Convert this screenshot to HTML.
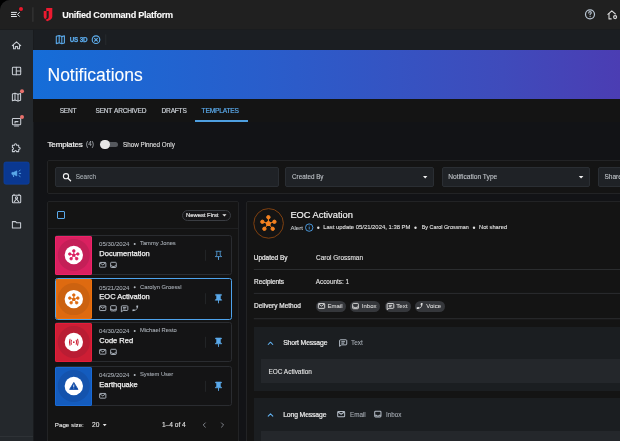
<!DOCTYPE html>
<html><head><meta charset="utf-8">
<style>
*{box-sizing:border-box;margin:0;padding:0}
html,body{width:620px;height:441px;overflow:hidden;background:#000;font-family:"Liberation Sans",sans-serif;}
.app{position:absolute;left:0;top:0;width:620px;height:441px;background:#121316;border-top-left-radius:10px;overflow:hidden;will-change:transform}
.abs{position:absolute}
.hdr{left:0;top:0;width:620px;height:29px;background:#202020}
.side{left:0;top:29px;width:33px;height:412px;background:#24282c}
.sub{left:33px;top:29px;width:587px;height:21px;background:#1b1e22}
.banner{left:33px;top:50px;width:587px;height:49px;background:linear-gradient(90deg,#156dd8 0%,#2c5bc9 45%,#3f4bbb 80%,#4b3db3 100%)}
.t{position:absolute;white-space:nowrap;line-height:1;-webkit-text-stroke:0.1px currentColor}
.m{font-weight:normal;-webkit-text-stroke:0.2px currentColor}
svg{position:absolute;overflow:visible}
</style></head><body>
<div class="app">
  <div class="abs hdr"></div>
  <div class="abs side"></div>
  <div class="abs sub"></div>
  <div class="abs" style="left:0;top:436px;width:33px;height:1px;background:#2e3236"></div>
  <div class="abs" style="left:0;top:28.5px;width:620px;height:1px;background:#1a1c1e"></div>
  <div class="abs" style="left:33px;top:29px;width:1px;height:412px;background:#191b1e"></div>
  <div class="abs banner"></div>
  <div class="abs" style="left:33px;top:99px;width:587px;height:22.5px;background:#141414"></div>


  <!-- header icons -->
  <svg style="left:0;top:0" width="620" height="29">
    <g stroke="#e2e6ea" stroke-width="1" stroke-linecap="butt" fill="none">
      <line x1="11" y1="12.4" x2="16.9" y2="12.4"/>
      <line x1="11" y1="14.45" x2="16.2" y2="14.45"/>
      <line x1="11" y1="16.5" x2="16.9" y2="16.5"/>
      <polyline points="19.7,12.2 17.5,14.4 19.7,16.6"/>
    </g>
    <circle cx="21" cy="9" r="2.6" fill="#1a1f1f"/>
    <circle cx="21" cy="9" r="2" fill="#e8192c"/>
    <rect x="32.4" y="7.3" width="1" height="14.5" fill="#3a3a3a"/>
    <path d="M46.2,8 H52.3 V16.6 C52.3,18.9 50.6,20.3 47.3,21.2 C46.5,20.8 45.9,20.3 45.4,19.8 C47.7,19.1 48.7,18.2 48.7,16.9 V11 H46.2 Z" fill="#ec1a30"/>
    <path d="M43.7,10.9 H46.6 V17.3 C46.6,18.1 46,18.6 45,19 C44.2,18.3 43.7,17.4 43.7,16.3 Z" fill="#ec1a30"/>
    <circle cx="590" cy="14.3" r="4.5" stroke="#b9c6d3" stroke-width="1.2" fill="none"/>
    <path d="M588.7,12.9 Q588.7,11.6 590,11.6 Q591.3,11.6 591.3,12.8 Q591.3,13.6 590.1,14.2 V14.8" stroke="#b9c6d3" stroke-width="1.1" fill="none" stroke-linecap="round"/>
    <circle cx="590.1" cy="16.6" r="0.65" fill="#b9c6d3"/>
    <g stroke="#d8d8d8" stroke-width="1.1" fill="none" stroke-linecap="round" stroke-linejoin="round">
      <polyline points="607.9,14.4 611.8,10.9 615.4,14"/>
      <polyline points="609,13.6 609,18.9 611.2,18.9"/>
      <circle cx="615.1" cy="17.1" r="1.5" stroke-width="1.2"/>
    </g>
  </svg>

  <!-- sub header -->
  <svg style="left:0;top:0" width="620" height="50">
    <g stroke="#5aa9ea" stroke-width="1.1" fill="none" stroke-linejoin="round">
      <path d="M56.3,36.3 L59.2,35.6 L61.8,36.6 L64.4,35.8 V43 L61.8,43.8 L59.2,42.8 L56.3,43.6 Z"/>
      <line x1="59.2" y1="35.6" x2="59.2" y2="42.8"/>
      <line x1="61.8" y1="36.6" x2="61.8" y2="43.8"/>
    </g>
    <circle cx="96" cy="39.7" r="3.8" stroke="#60b0f0" stroke-width="1.1" fill="none"/>
    <path d="M94.6,38.3 L97.4,41.1 M97.4,38.3 L94.6,41.1" stroke="#60b0f0" stroke-width="1.1" stroke-linecap="round"/>
    <rect x="105.4" y="34.3" width="0.8" height="10.7" fill="#2a2d31"/>
  </svg>
  <div class="t" style="left:69.7px;top:36.9px;font-size:6.3px;letter-spacing:-0.15px;font-weight:bold;-webkit-text-stroke:0.25px #5aa9ea;color:#5aa9ea">US 3D</div>


  <!-- sidebar icons -->
  <svg style="left:0;top:0" width="33" height="441">
    <g stroke="#c7ccd3" stroke-width="1.05" fill="none" stroke-linejoin="round" stroke-linecap="round">
      <!-- home -->
      <path d="M12.3,45.6 L16.5,41.8 L20.7,45.6 M13.5,44.6 V48.8 H15.4 V46.6 H17.6 V48.8 H19.5 V44.6"/>
      <!-- dashboard -->
      <rect x="12.4" y="67.2" width="8.3" height="7.6" rx="0.8"/>
      <line x1="16.3" y1="67.2" x2="16.3" y2="74.8"/>
      <line x1="16.3" y1="71" x2="20.7" y2="71"/>
      <!-- map -->
      <path d="M12.4,94 L15,93.3 L18,94.2 L20.6,93.5 V100.3 L18,101 L15,100.1 L12.4,100.8 Z"/>
      <line x1="15" y1="93.3" x2="15" y2="100.1"/>
      <line x1="18" y1="94.2" x2="18" y2="101"/>
      <!-- monitor -->
      <rect x="12.4" y="118.4" width="8.3" height="6.4" rx="0.8"/>
      <line x1="14.5" y1="126" x2="18.5" y2="126"/>
      <path d="M15,123 V121.6 H18"/>
      <!-- puzzle -->
      <path d="M12.4,145.3 H14.5 C14.5,143.3 16.6,143.3 16.6,145.3 H18.7 V147.3 C20.7,147.3 20.7,149.4 18.7,149.4 V151.6 H16.5 C16.5,150 14.6,150 14.6,151.6 H12.4 V149.5 C13.9,149.5 13.9,147.4 12.4,147.4 Z"/>
      <!-- id badge -->
      <rect x="12.4" y="195.3" width="8.3" height="7.4" rx="0.8"/>
      <path d="M14,195.3 V194.2 M19,195.3 V194.2"/>
      <circle cx="16.5" cy="197.8" r="1.1"/>
      <path d="M14.3,201.6 L16.5,199 L18.7,201.6"/>
      <!-- folder -->
      <path d="M12.4,221.6 H15.6 L16.6,222.8 H20.6 V228 H12.4 Z"/>
    </g>
    <circle cx="22" cy="91.2" r="2" fill="#e8706c"/>
    <circle cx="22" cy="117" r="2" fill="#e8706c"/>
    <rect x="3.9" y="162" width="25.3" height="22.2" rx="2" fill="#0a3891" stroke="#0d44a8" stroke-width="0.6"/>
    <g fill="#5aa9ea" stroke="#5aa9ea" stroke-linecap="round">
      <path d="M12,172.3 C11.6,172.3 11.6,174.5 12,174.5 H13.6 L16.9,176 V170.8 L13.6,172.3 Z" stroke-width="0.5"/>
      <path d="M13.1,174.6 L13.6,176.6" stroke-width="1"/>
      <path d="M19,171.1 L20.1,170.3 M19.3,173.4 H20.7 M19,175.7 L20.1,176.5" stroke-width="0.9" fill="none"/>
    </g>
  </svg>

  <!-- header content -->
  <div class="t" style="left:62.2px;top:10.7px;font-size:9.1px;letter-spacing:-0.27px;font-weight:bold;color:#fafafa">Unified Command Platform</div>
  <div class="t" style="left:47.5px;top:66.5px;font-size:17.5px;color:#fff">Notifications</div>

  <!-- tabs -->
  <div class="t" style="left:59.7px;top:108.1px;font-size:6.55px;letter-spacing:-0.2px;-webkit-text-stroke:0.2px #c9ced4;color:#c9ced4">SENT</div>
  <div class="t" style="left:95.5px;top:108.1px;font-size:6.55px;letter-spacing:-0.2px;word-spacing:0.7px;-webkit-text-stroke:0.2px #c9ced4;color:#c9ced4">SENT ARCHIVED</div>
  <div class="t" style="left:161.6px;top:108.1px;font-size:6.55px;letter-spacing:-0.2px;-webkit-text-stroke:0.2px #c9ced4;color:#c9ced4">DRAFTS</div>
  <div class="t" style="left:201.6px;top:108.1px;font-size:6.65px;letter-spacing:-0.2px;-webkit-text-stroke:0.2px #5aa9ea;color:#5aa9ea">TEMPLATES</div>
  <div class="abs" style="left:194.5px;top:120px;width:53px;height:2px;background:#4e9fe0"></div>

  <!-- templates row -->
  <div class="t" style="left:47.5px;top:140.9px;font-size:8.1px;letter-spacing:-0.2px;-webkit-text-stroke:0.22px #f0f0f0;color:#f0f0f0">Templates</div>
  <div class="t" style="left:86px;top:141px;font-size:6.4px;color:#a8adb3">(4)</div>
  <div class="abs" style="left:101px;top:141.8px;width:16.5px;height:5.6px;border-radius:3px;background:#55585d"></div>
  <div class="abs" style="left:100.4px;top:139.6px;width:9.6px;height:9.6px;border-radius:50%;background:#e6e6e6"></div>
  <div class="t" style="left:123px;top:141.6px;font-size:6.3px;color:#e0e0e0">Show Pinned Only</div>

  <!-- filter panel -->
  <div class="abs" style="left:47.2px;top:160.4px;width:600px;height:33.8px;border:1px solid #222325;border-radius:2px;background:#141414"></div>
  <div class="abs" style="left:55px;top:167px;width:223.5px;height:20px;border:1px solid #2a2e33;border-radius:2px;background:#1f2226"></div>
  <div class="abs" style="left:285.3px;top:167px;width:149.2px;height:20px;border:1px solid #2a2e33;border-radius:2px;background:#1f2226"></div>
  <div class="abs" style="left:441.8px;top:167px;width:148.5px;height:20px;border:1px solid #2a2e33;border-radius:2px;background:#1f2226"></div>
  <div class="abs" style="left:598px;top:167px;width:100px;height:20px;border:1px solid #2a2e33;border-radius:2px;background:#1f2226"></div>
  <svg style="left:0;top:0" width="620" height="200">
    <circle cx="66" cy="176.2" r="2.6" stroke="#f0f0f0" stroke-width="1.1" fill="none"/>
    <line x1="68" y1="178.2" x2="70.6" y2="180.8" stroke="#f0f0f0" stroke-width="1.3" stroke-linecap="round"/>
    <path d="M423,176 H427.4 L425.2,178.4 Z" fill="#f0f0f0"/>
    <path d="M578.8,176 H583.4 L581.1,178.4 Z" fill="#f0f0f0"/>
  </svg>
  <div class="t" style="left:75.8px;top:174.4px;font-size:6.4px;color:#aab0b6">Search</div>
  <div class="t" style="left:292px;top:174.3px;font-size:6.3px;color:#c0c5ca">Created By</div>
  <div class="t" style="left:448.3px;top:174.3px;font-size:6.65px;color:#c0c5ca">Notification Type</div>
  <div class="t" style="left:604.5px;top:174.3px;font-size:6.5px;color:#c0c5ca">Shared</div>

  <!-- list panel -->
  <div class="abs" style="left:47.2px;top:201px;width:191.5px;height:260px;border:1px solid #222325;border-radius:2px;background:#141414"></div>
  <div class="abs" style="left:48px;top:228px;width:190px;height:1px;background:#1f2022"></div>
  <div class="abs" style="left:57px;top:211px;width:8.2px;height:8.2px;border:1.1px solid #5aa9ea;border-radius:1px"></div>
  <div class="abs" style="left:182.3px;top:209.6px;width:49.1px;height:11.3px;border:1px solid #3a3d42;border-radius:6px;background:#161618"></div>
  <div class="t" style="left:186px;top:212.6px;font-size:5.85px;-webkit-text-stroke:0.2px #e0e0e0;color:#e0e0e0">Newest First</div>
  <svg style="left:0;top:0" width="620" height="441">
    <path d="M222.3,214.3 H226.5 L224.4,216.5 Z" fill="#e8e8e8"/>
  </svg>
  <!-- CARDS -->
<div class="abs" style="left:54.5px;top:235.0px;width:177.4px;height:40px;border:1px solid #2a2c30;border-radius:2.5px;background:#141415"></div>
<div class="abs" style="left:54.9px;top:236.0px;width:37.1px;height:38.8px;border-radius:2px;background:#da2060;box-shadow:inset 0 0 0 0.8px #f5246c"></div>
<svg style="left:0;top:0" width="620" height="441">
<circle cx="73.8" cy="255.0" r="16" fill="#c41f57"/><circle cx="73.8" cy="255.0" r="9.2" fill="#fff"/>
<g transform="translate(73.8,255.2) scale(0.67)" fill="#da2060" stroke="#da2060"><line x1="0" y1="0" x2="0" y2="-6.4" stroke-width="1.2"/><circle cx="0" cy="-6.4" r="2"/><line x1="0" y1="0" x2="-6" y2="-1.8" stroke-width="1.2"/><circle cx="-6" cy="-1.8" r="2"/><line x1="0" y1="0" x2="6" y2="-1.8" stroke-width="1.2"/><circle cx="6" cy="-1.8" r="2"/><line x1="0" y1="0" x2="-4" y2="5.2" stroke-width="1.2"/><circle cx="-4" cy="5.2" r="2"/><line x1="0" y1="0" x2="4.3" y2="5.2" stroke-width="1.2"/><circle cx="4.3" cy="5.2" r="2"/><path d="M0,-3 L2.9,-0.9 L1.8,2.5 L-1.8,2.5 L-2.9,-0.9 Z" stroke="none"/></g>
<rect x="205.2" y="249.8" width="0.8" height="11" fill="#26282b"/>
<g transform="translate(0,0.6)" stroke="#5aa9ea" stroke-width="0.8" fill="none" stroke-linejoin="round"><path d="M215.6,250.7 H221.4 M216.8,250.9 V254.6 L215.3,256.0 H221.7 L220.2,254.6 V250.9"/><line x1="218.5" y1="256.0" x2="218.5" y2="259.3" stroke-width="0.9"/></g>
<g transform="translate(99.2,262.0) scale(1.0)" stroke="#b4bcc6" stroke-width="0.9" fill="none" stroke-linejoin="round"><rect x="0.45" y="0.45" width="6.2" height="4.7" rx="0.6"/><polyline points="0.7,0.9 3.55,2.9 6.4,0.9"/></g>
<g transform="translate(110.2,262.0) scale(1.0)" stroke="#b4bcc6" stroke-width="0.9" fill="none" stroke-linejoin="round"><rect x="0.45" y="0.3" width="5.6" height="5.2" rx="0.8"/><polyline points="0.45,3.9 2,3.9 2.4,4.6 4.1,4.6 4.5,3.9 6.05,3.9"/></g>
</svg>
<div class="t" style="left:99.1px;top:241.1px;font-size:6.05px;color:#a4aab1">05/30/2024</div>
<svg style="left:0;top:0" width="620" height="441"><circle cx="134.7" cy="243.9" r="1" fill="#b4bac0"/></svg>
<div class="t" style="left:140px;top:241.1px;font-size:5.8px;color:#a4aab1">Tammy Jones</div>
<div class="t" style="left:99.3px;top:249.55px;font-size:7.5px;-webkit-text-stroke:0.25px #f2f2f2;color:#f2f2f2">Documentation</div>
<div class="abs" style="left:54.5px;top:278.4px;width:177.4px;height:41.4px;border:1.2px solid #4ea3ec;border-radius:2.5px;background:#141415"></div>
<div class="abs" style="left:55.7px;top:279.29999999999995px;width:36.3px;height:39.3px;border-radius:2px;background:#de6a10;box-shadow:inset 0 0 0 0.8px #f2740a"></div>
<svg style="left:0;top:0" width="620" height="441">
<circle cx="73.8" cy="299.09999999999997" r="16" fill="#cc6210"/><circle cx="73.8" cy="299.09999999999997" r="9.2" fill="#fff"/>
<g transform="translate(73.8,299.29999999999995) scale(0.67)" fill="#de6a10" stroke="#de6a10"><line x1="0" y1="0" x2="0" y2="-6.4" stroke-width="1.2"/><circle cx="0" cy="-6.4" r="2"/><line x1="0" y1="0" x2="-6" y2="-1.8" stroke-width="1.2"/><circle cx="-6" cy="-1.8" r="2"/><line x1="0" y1="0" x2="6" y2="-1.8" stroke-width="1.2"/><circle cx="6" cy="-1.8" r="2"/><line x1="0" y1="0" x2="-4" y2="5.2" stroke-width="1.2"/><circle cx="-4" cy="5.2" r="2"/><line x1="0" y1="0" x2="4.3" y2="5.2" stroke-width="1.2"/><circle cx="4.3" cy="5.2" r="2"/><path d="M0,-3 L2.9,-0.9 L1.8,2.5 L-1.8,2.5 L-2.9,-0.9 Z" stroke="none"/></g>
<rect x="205.2" y="293.2" width="0.8" height="11" fill="#26282b"/>
<g transform="translate(0,0.6)" fill="#5aa9ea" stroke="#5aa9ea" stroke-width="0.6" stroke-linejoin="round"><path d="M215.6,293.79999999999995 H221.4 V294.79999999999995 H220.4 V298.0 L221.8,299.59999999999997 H215.2 L216.6,298.0 V294.79999999999995 H215.6 Z"/><line x1="218.5" y1="299.4" x2="218.5" y2="302.7" stroke-width="0.9"/></g>
<g transform="translate(99.2,305.4) scale(1.0)" stroke="#b4bcc6" stroke-width="0.9" fill="none" stroke-linejoin="round"><rect x="0.45" y="0.45" width="6.2" height="4.7" rx="0.6"/><polyline points="0.7,0.9 3.55,2.9 6.4,0.9"/></g>
<g transform="translate(110.2,305.4) scale(1.0)" stroke="#b4bcc6" stroke-width="0.9" fill="none" stroke-linejoin="round"><rect x="0.45" y="0.3" width="5.6" height="5.2" rx="0.8"/><polyline points="0.45,3.9 2,3.9 2.4,4.6 4.1,4.6 4.5,3.9 6.05,3.9"/></g>
<g transform="translate(120.9,305.4) scale(1.0)" stroke="#b4bcc6" stroke-width="0.9" fill="none" stroke-linejoin="round"><path d="M1.2,0.45 H6.2 Q6.95,0.45 6.95,1.2 V4.3 Q6.95,5.05 6.2,5.05 H2.3 L0.45,6.4 V1.2 Q0.45,0.45 1.2,0.45 Z"/><line x1="2" y1="2.2" x2="5.4" y2="2.2"/><line x1="2" y1="3.5" x2="4.6" y2="3.5"/></g>
<g transform="translate(132.4,305.4) scale(1.0) translate(5.8,0) scale(-0.32,0.32) translate(-3,-3)" fill="#b4bcc6"><path d="M6.62 10.79c1.44 2.830 3.760 5.140 6.590 6.590l2.200-2.200c.270-.270.670-.360 1.020-.240 1.120.370 2.330.570 3.570.570.550 0 1 .450 1 1V20c0 .550-.450 1-1 1-9.390 0-17-7.610-17-17 0-.550.450-1 1-1h3.500c.550 0 1 .450 1 1 0 1.250.200 2.450.570 3.570.110.350.030.740-.250 1.020l-2.200 2.200z"/></g>
</svg>
<div class="t" style="left:99.1px;top:284.5px;font-size:6.05px;color:#a4aab1">05/21/2024</div>
<svg style="left:0;top:0" width="620" height="441"><circle cx="134.7" cy="287.29999999999995" r="1" fill="#b4bac0"/></svg>
<div class="t" style="left:140px;top:284.5px;font-size:5.8px;color:#a4aab1">Carolyn Groessl</div>
<div class="t" style="left:99.3px;top:292.95px;font-size:7.5px;-webkit-text-stroke:0.25px #f2f2f2;color:#f2f2f2">EOC Activation</div>
<div class="abs" style="left:54.5px;top:322.0px;width:177.4px;height:40px;border:1px solid #2a2c30;border-radius:2.5px;background:#141415"></div>
<div class="abs" style="left:54.9px;top:323.0px;width:37.1px;height:38.8px;border-radius:2px;background:#cd1e34;box-shadow:inset 0 0 0 0.8px #ee1c3e"></div>
<svg style="left:0;top:0" width="620" height="441">
<circle cx="73.8" cy="342.0" r="16" fill="#b91d33"/><circle cx="73.8" cy="342.0" r="9.2" fill="#fff"/>
<g stroke="#cd1e34" stroke-width="1.05" fill="none" stroke-linecap="round"><path d="M71.4,340.2 Q70.6,342.2 71.4,344.2 M76.2,340.2 Q77,342.2 76.2,344.2 M70,339.2 Q68.8,342.2 70,345.2 M77.6,339.2 Q78.8,342.2 77.6,345.2"/></g><circle cx="73.8" cy="342.2" r="0.85" fill="#cd1e34"/>
<rect x="205.2" y="336.8" width="0.8" height="11" fill="#26282b"/>
<g transform="translate(0,0.6)" fill="#5aa9ea" stroke="#5aa9ea" stroke-width="0.6" stroke-linejoin="round"><path d="M215.6,337.4 H221.4 V338.4 H220.4 V341.6 L221.8,343.2 H215.2 L216.6,341.6 V338.4 H215.6 Z"/><line x1="218.5" y1="343.0" x2="218.5" y2="346.3" stroke-width="0.9"/></g>
<g transform="translate(99.2,349.0) scale(1.0)" stroke="#b4bcc6" stroke-width="0.9" fill="none" stroke-linejoin="round"><rect x="0.45" y="0.45" width="6.2" height="4.7" rx="0.6"/><polyline points="0.7,0.9 3.55,2.9 6.4,0.9"/></g>
<g transform="translate(110.2,349.0) scale(1.0)" stroke="#b4bcc6" stroke-width="0.9" fill="none" stroke-linejoin="round"><rect x="0.45" y="0.3" width="5.6" height="5.2" rx="0.8"/><polyline points="0.45,3.9 2,3.9 2.4,4.6 4.1,4.6 4.5,3.9 6.05,3.9"/></g>
</svg>
<div class="t" style="left:99.1px;top:328.1px;font-size:6.05px;color:#a4aab1">04/30/2024</div>
<svg style="left:0;top:0" width="620" height="441"><circle cx="134.7" cy="330.9" r="1" fill="#b4bac0"/></svg>
<div class="t" style="left:140px;top:328.1px;font-size:5.8px;color:#a4aab1">Michael Resto</div>
<div class="t" style="left:99.3px;top:336.55px;font-size:7.5px;-webkit-text-stroke:0.25px #f2f2f2;color:#f2f2f2">Code Red</div>
<div class="abs" style="left:54.5px;top:366.0px;width:177.4px;height:40px;border:1px solid #2a2c30;border-radius:2.5px;background:#141415"></div>
<div class="abs" style="left:54.9px;top:367.0px;width:37.1px;height:38.8px;border-radius:2px;background:#145cbe;box-shadow:inset 0 0 0 0.8px #1a6ddc"></div>
<svg style="left:0;top:0" width="620" height="441">
<circle cx="73.8" cy="386.0" r="16" fill="#1453ad"/><circle cx="73.8" cy="386.0" r="9.2" fill="#fff"/>
<path d="M73.8,382.4 L78,389.4 H69.6 Z" fill="#0e49a6" stroke="#0e49a6" stroke-width="0.8" stroke-linejoin="round"/><rect x="73.4" y="384.6" width="0.8" height="2.4" fill="#fff"/><rect x="73.4" y="387.6" width="0.8" height="0.8" fill="#fff"/>
<rect x="205.2" y="380.8" width="0.8" height="11" fill="#26282b"/>
<g transform="translate(0,0.6)" fill="#5aa9ea" stroke="#5aa9ea" stroke-width="0.6" stroke-linejoin="round"><path d="M215.6,381.4 H221.4 V382.4 H220.4 V385.6 L221.8,387.2 H215.2 L216.6,385.6 V382.4 H215.6 Z"/><line x1="218.5" y1="387.0" x2="218.5" y2="390.3" stroke-width="0.9"/></g>
<g transform="translate(99.2,393.0) scale(1.0)" stroke="#b4bcc6" stroke-width="0.9" fill="none" stroke-linejoin="round"><rect x="0.45" y="0.45" width="6.2" height="4.7" rx="0.6"/><polyline points="0.7,0.9 3.55,2.9 6.4,0.9"/></g>
</svg>
<div class="t" style="left:99.1px;top:372.1px;font-size:6.05px;color:#a4aab1">04/29/2024</div>
<svg style="left:0;top:0" width="620" height="441"><circle cx="134.7" cy="374.9" r="1" fill="#b4bac0"/></svg>
<div class="t" style="left:140px;top:372.1px;font-size:5.8px;color:#a4aab1">System User</div>
<div class="t" style="left:99.3px;top:380.55px;font-size:7.5px;-webkit-text-stroke:0.25px #f2f2f2;color:#f2f2f2">Earthquake</div>
  <!-- /CARDS -->
  <!-- DETAIL -->
<div class="abs" style="left:246.2px;top:201px;width:400px;height:260px;border:1px solid #222325;border-radius:2px;background:#141414"></div>
<svg style="left:0;top:0" width="620" height="441">
<circle cx="268.6" cy="223.4" r="14.8" stroke="#8a4510" stroke-width="0.9" fill="none"/>
<g transform="translate(268.4,223.6)" fill="#f58220" stroke="#f58220"><line x1="0" y1="0" x2="0" y2="-6.4" stroke-width="1"/><circle cx="0" cy="-6.4" r="1.7"/><line x1="0" y1="0" x2="-6" y2="-1.8" stroke-width="1"/><circle cx="-6" cy="-1.8" r="1.7"/><line x1="0" y1="0" x2="6" y2="-1.8" stroke-width="1"/><circle cx="6" cy="-1.8" r="1.7"/><line x1="0" y1="0" x2="-4" y2="5.2" stroke-width="1"/><circle cx="-4" cy="5.2" r="1.7"/><line x1="0" y1="0" x2="4.3" y2="5.2" stroke-width="1"/><circle cx="4.3" cy="5.2" r="1.7"/><path d="M0,-3 L2.9,-0.9 L1.8,2.5 L-1.8,2.5 L-2.9,-0.9 Z" stroke="none"/></g>
<circle cx="309.2" cy="227.6" r="3.7" stroke="#4ea3ec" stroke-width="0.9" fill="none"/><rect x="308.8" y="227" width="0.8" height="2.4" fill="#4ea3ec"/><rect x="308.8" y="225.6" width="0.8" height="0.8" fill="#4ea3ec"/>
<circle cx="318.3" cy="227.8" r="1.2" fill="#e0e0e0"/>
<circle cx="415.5" cy="227.8" r="1.2" fill="#e0e0e0"/>
<circle cx="474" cy="227.8" r="1.2" fill="#e0e0e0"/>
<rect x="253.8" y="269" width="400" height="0.9" fill="#2e3033"/>
<rect x="253.8" y="292.9" width="400" height="0.9" fill="#2e3033"/>
<rect x="253.8" y="318.3" width="400" height="0.9" fill="#2e3033"/>
</svg>
<div class="t" style="left:290.4px;top:210.5px;font-size:9.3px;-webkit-text-stroke:0.18px #f2f2f2;color:#f2f2f2">EOC Activation</div>
<div class="t" style="left:290.4px;top:224.8px;font-size:6.05px;color:#c4c8cc">Alert</div>
<div class="t" style="left:323.3px;top:225.2px;font-size:5.9px;color:#e0e0e0">Last update 05/21/2024, 1:38 PM</div>
<div class="t" style="left:421.7px;top:225.2px;font-size:5.42px;color:#e0e0e0">By Carol Grossman</div>
<div class="t" style="left:479px;top:225.2px;font-size:5.75px;color:#e0e0e0">Not shared</div>
<div class="t" style="left:253.8px;top:254.8px;font-size:6.45px;-webkit-text-stroke:0.2px #ececec;color:#ececec">Updated By</div>
<div class="t" style="left:316px;top:255.4px;font-size:6.46px;color:#e6e6e6">Carol Grossman</div>
<div class="t" style="left:254px;top:278.9px;font-size:6.45px;-webkit-text-stroke:0.2px #ececec;color:#ececec">Recipients</div>
<div class="t" style="left:315.8px;top:279.4px;font-size:6.35px;color:#e6e6e6">Accounts: 1</div>
<div class="t" style="left:254px;top:303.3px;font-size:6.5px;-webkit-text-stroke:0.2px #ececec;color:#ececec">Delivery Method</div>
<div class="abs" style="left:315.7px;top:300.8px;width:30.5px;height:11.2px;border-radius:6px;background:#35373b"></div>
<div class="t" style="left:327.5px;top:302.9px;font-size:6px;color:#d6d6d6">Email</div>
<div class="abs" style="left:350px;top:300.8px;width:30px;height:11.2px;border-radius:6px;background:#35373b"></div>
<div class="t" style="left:361.8px;top:302.9px;font-size:6px;color:#d6d6d6">Inbox</div>
<div class="abs" style="left:384.5px;top:300.8px;width:26.5px;height:11.2px;border-radius:6px;background:#35373b"></div>
<div class="t" style="left:396.3px;top:302.9px;font-size:6px;color:#d6d6d6">Text</div>
<div class="abs" style="left:414.5px;top:300.8px;width:30.5px;height:11.2px;border-radius:6px;background:#35373b"></div>
<div class="t" style="left:426.3px;top:302.9px;font-size:6px;color:#d6d6d6">Voice</div>
<svg style="left:0;top:0" width="620" height="441">
<g transform="translate(317.9,303.1) scale(1.02)" stroke="#e0e0e0" stroke-width="0.9" fill="none" stroke-linejoin="round"><rect x="0.45" y="0.45" width="6.2" height="4.7" rx="0.6"/><polyline points="0.7,0.9 3.55,2.9 6.4,0.9"/></g>
<g transform="translate(352.2,303.1) scale(1.02)" stroke="#e0e0e0" stroke-width="0.9" fill="none" stroke-linejoin="round"><rect x="0.45" y="0.3" width="5.6" height="5.2" rx="0.8"/><polyline points="0.45,3.9 2,3.9 2.4,4.6 4.1,4.6 4.5,3.9 6.05,3.9"/></g>
<g transform="translate(386.7,303.1) scale(1.02)" stroke="#e0e0e0" stroke-width="0.9" fill="none" stroke-linejoin="round"><path d="M1.2,0.45 H6.2 Q6.95,0.45 6.95,1.2 V4.3 Q6.95,5.05 6.2,5.05 H2.3 L0.45,6.4 V1.2 Q0.45,0.45 1.2,0.45 Z"/><line x1="2" y1="2.2" x2="5.4" y2="2.2"/><line x1="2" y1="3.5" x2="4.6" y2="3.5"/></g>
<g transform="translate(416.7,303.1) scale(1.02) translate(5.8,0) scale(-0.32,0.32) translate(-3,-3)" fill="#e0e0e0"><path d="M6.62 10.79c1.44 2.830 3.760 5.140 6.590 6.590l2.200-2.200c.270-.270.670-.360 1.020-.240 1.120.370 2.330.570 3.570.570.550 0 1 .450 1 1V20c0 .550-.450 1-1 1-9.390 0-17-7.610-17-17 0-.550.450-1 1-1h3.500c.550 0 1 .450 1 1 0 1.250.200 2.450.570 3.570.110.350.030.740-.250 1.020l-2.200 2.200z"/></g>
</svg>
<div class="abs" style="left:253.9px;top:326.8px;width:400px;height:63.8px;background:#1b1e21"></div>
<div class="abs" style="left:261.2px;top:359.3px;width:400px;height:23.6px;background:#24272b"></div>
<div class="abs" style="left:253.9px;top:397.9px;width:400px;height:60px;background:#1b1e21"></div>
<div class="abs" style="left:261.2px;top:430.7px;width:400px;height:30px;background:#24272b"></div>
<svg style="left:0;top:0" width="620" height="441">
<polyline points="268.2,344.5 270.5,342.2 272.8,344.5" stroke="#62b3f3" stroke-width="1.05" fill="none" stroke-linecap="round" stroke-linejoin="round"/>
<polyline points="268.2,416.1 270.5,413.8 272.8,416.1" stroke="#62b3f3" stroke-width="1.05" fill="none" stroke-linecap="round" stroke-linejoin="round"/>
<g transform="translate(339.1,339.3) scale(1.1)" stroke="#b4bcc6" stroke-width="0.9" fill="none" stroke-linejoin="round"><path d="M1.2,0.45 H6.2 Q6.95,0.45 6.95,1.2 V4.3 Q6.95,5.05 6.2,5.05 H2.3 L0.45,6.4 V1.2 Q0.45,0.45 1.2,0.45 Z"/><line x1="2" y1="2.2" x2="5.4" y2="2.2"/><line x1="2" y1="3.5" x2="4.6" y2="3.5"/></g>
<g transform="translate(337.2,411) scale(1.12)" stroke="#b4bcc6" stroke-width="0.9" fill="none" stroke-linejoin="round"><rect x="0.45" y="0.45" width="6.2" height="4.7" rx="0.6"/><polyline points="0.7,0.9 3.55,2.9 6.4,0.9"/></g>
<g transform="translate(374.2,410.8) scale(1.12)" stroke="#b4bcc6" stroke-width="0.9" fill="none" stroke-linejoin="round"><rect x="0.45" y="0.3" width="5.6" height="5.2" rx="0.8"/><polyline points="0.45,3.9 2,3.9 2.4,4.6 4.1,4.6 4.5,3.9 6.05,3.9"/></g>
</svg>
<div class="t" style="left:283.2px;top:340.2px;font-size:6.8px;letter-spacing:-0.12px;-webkit-text-stroke:0.2px #ececec;color:#ececec">Short Message</div>
<div class="t" style="left:351px;top:339.7px;font-size:6.5px;color:#a4aab1">Text</div>
<div class="t" style="left:268.4px;top:369px;font-size:6.47px;color:#e6e6e6">EOC Activation</div>
<div class="t" style="left:283.2px;top:411.7px;font-size:6.8px;letter-spacing:-0.12px;-webkit-text-stroke:0.2px #ececec;color:#ececec">Long Message</div>
<div class="t" style="left:350px;top:411.8px;font-size:6.3px;color:#a4aab1">Email</div>
<div class="t" style="left:386px;top:411.8px;font-size:6.3px;color:#a4aab1">Inbox</div>
<div class="t" style="left:54.8px;top:421.8px;font-size:6.23px;color:#e6e6e6">Page size:</div>
<div class="t" style="left:92px;top:421.8px;font-size:6.6px;color:#e6e6e6">20</div>
<div class="t" style="left:161.9px;top:421.8px;font-size:6.61px;color:#e6e6e6">1–4 of 4</div>
<svg style="left:0;top:0" width="620" height="441"><path d="M102.8,424 H106.6 L104.7,426.2 Z" fill="#e6e6e6"/><polyline points="205.6,422.6 203.2,425 205.6,427.4" stroke="#8a8f96" stroke-width="0.9" fill="none"/><polyline points="221.2,422.6 223.6,425 221.2,427.4" stroke="#8a8f96" stroke-width="0.9" fill="none"/></svg>
  <!-- /DETAIL -->
</div>
</body></html>
